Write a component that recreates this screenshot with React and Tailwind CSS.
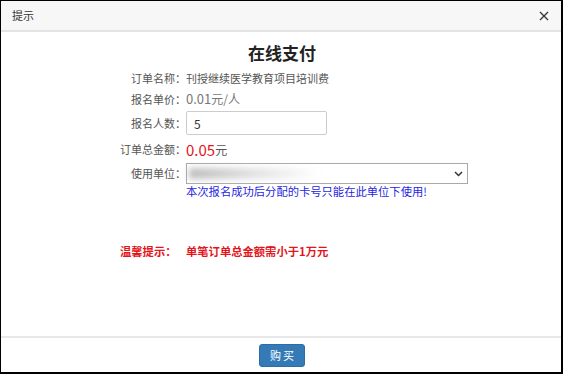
import React from 'react'

const font = { fontFamily: '"Microsoft YaHei", "Noto Sans CJK SC", "Liberation Sans", sans-serif' }

function Row({ label, children, className = '' }) {
  return (
    <div className={'flex items-center ' + className}>
      <div className="w-[185px] shrink-0 text-right text-[11px] text-[#555]">{label}</div>
      <div className="flex items-center">{children}</div>
    </div>
  )
}

export default function App() {
  return (
    <div style={font} className="w-[563px] h-[374px] bg-white border-t border-l border-black border-r-2 border-b-2 flex flex-col overflow-hidden">
      <div className="h-[31px] shrink-0 bg-[#f7f7f7] border-b-2 border-[#e4e4e4] flex items-center justify-between pl-[11px] pr-[12px]">
        <span className="text-[11px] text-[#333]">提示</span>
        <svg width="10" height="10" viewBox="0 0 10 10" className="text-[#333]">
          <path d="M1 1 L9 9 M9 1 L1 9" stroke="currentColor" strokeWidth="1.3" fill="none" />
        </svg>
      </div>

      <div className="flex-1 flex flex-col">
        <h1 className="mt-[9px] h-[24px] leading-[24px] text-center text-[17px] font-bold text-[#222] pl-[2px]">在线支付</h1>

        <Row label="订单名称：" className="h-[20px] mt-[3px]">
          <span className="text-[11px] text-[#555]">刊授继续医学教育项目培训费</span>
        </Row>
        <Row label="报名单价：" className="h-[20px] mt-[1px]">
          <span className="text-[13px] text-[#777]">0.01<span className="text-[12px]">元/人</span></span>
        </Row>
        <Row label="报名人数：" className="h-[24px] mt-[2px]">
          <input
            defaultValue="5"
            className="w-[141px] h-[24px] border border-[#ccc] rounded-[2px] px-[7px] text-[12px] text-[#333] focus:outline-none"
          />
        </Row>
        <Row label="订单总金额：" className="h-[20px] mt-[4px]">
          <span className="text-[15px] text-[#e4141b] leading-none">0.05</span>
          <span className="text-[12px] text-[#555] leading-none mt-[2px]">元</span>
        </Row>
        <Row label="使用单位：" className="h-[21px] mt-[4px]">
          <div className="relative w-[282px] h-[21px] border border-[#a9a9a9] bg-white">
            <div className="absolute left-[2px] top-[4px] w-[130px] h-[11px] blur-[3px] bg-gradient-to-r from-[#bdbdbd] via-[#e2e2e2] to-transparent" />
            <svg width="9" height="6" viewBox="0 0 9 6" className="absolute right-[4px] top-[7px]">
              <path d="M1 1 L4.5 4.5 L8 1" stroke="#333" strokeWidth="1.5" fill="none" />
            </svg>
          </div>
        </Row>
        <div className="pl-[185px] h-[15px] leading-[15px] text-[11.3px] text-[#1f1fe0]">
          本次报名成功后分配的卡号只能在此单位下使用!
        </div>

        <div className="mt-[44px] h-[16px] flex items-center text-[11.3px] font-bold text-[#e4141b]">
          <span className="w-[185px] pl-[119px] shrink-0">温馨提示：</span>
          <span>单笔订单总金额需小于1万元</span>
        </div>
      </div>

      <div className="h-[36px] shrink-0 border-t-2 border-[#e8e8e8] flex items-center justify-center">
        <button className="w-[46px] h-[23px] rounded-[3px] bg-[#337ab7] border border-[#2e6da4] text-white text-[11px] tracking-[2px] pl-[2px] ml-[2px]">
          购买
        </button>
      </div>
    </div>
  )
}
